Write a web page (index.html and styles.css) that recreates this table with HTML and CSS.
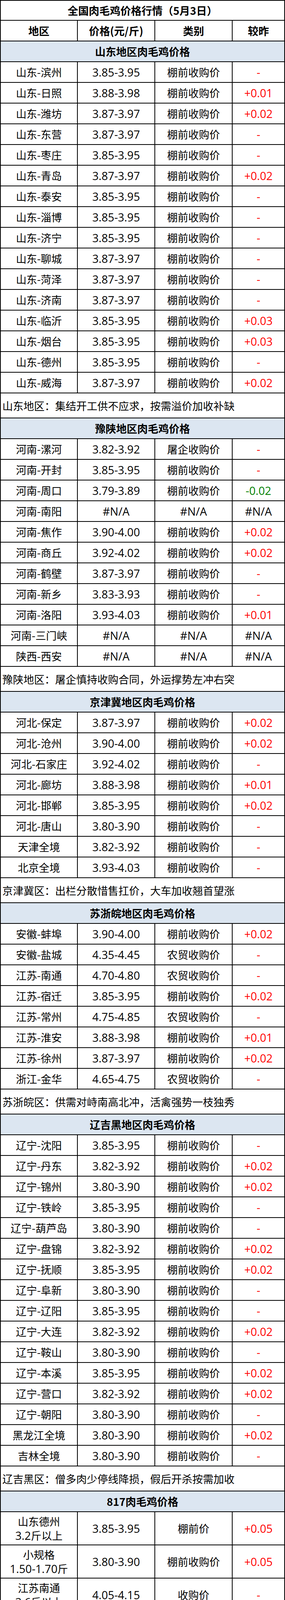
FILE: index.html
```html
<!DOCTYPE html>
<html lang="zh-CN">
<head>
<meta charset="utf-8">
<title>全国肉毛鸡价格行情</title>
<link rel="stylesheet" href="styles.css">
</head>
<body>
<div class="sheet">
  <div class="row title"><div class="c wide">全国肉毛鸡价格行情（5月3日）</div></div>
  <div class="row head"><div class="c">地区</div><div class="c">价格(元/斤)</div><div class="c">类别</div><div class="c">较昨</div></div>

  <div class="row sec"><div class="c wide">山东地区肉毛鸡价格</div></div>
  <div class="row"><div class="c">山东-滨州</div><div class="c n">3.85-3.95</div><div class="c">棚前收购价</div><div class="c n flat">-</div></div>
  <div class="row"><div class="c">山东-日照</div><div class="c n">3.88-3.98</div><div class="c">棚前收购价</div><div class="c n up">+0.01</div></div>
  <div class="row"><div class="c">山东-潍坊</div><div class="c n">3.87-3.97</div><div class="c">棚前收购价</div><div class="c n up">+0.02</div></div>
  <div class="row"><div class="c">山东-东营</div><div class="c n">3.87-3.97</div><div class="c">棚前收购价</div><div class="c n flat">-</div></div>
  <div class="row"><div class="c">山东-枣庄</div><div class="c n">3.85-3.95</div><div class="c">棚前收购价</div><div class="c n flat">-</div></div>
  <div class="row"><div class="c">山东-青岛</div><div class="c n">3.87-3.97</div><div class="c">棚前收购价</div><div class="c n up">+0.02</div></div>
  <div class="row"><div class="c">山东-泰安</div><div class="c n">3.85-3.95</div><div class="c">棚前收购价</div><div class="c n flat">-</div></div>
  <div class="row"><div class="c">山东-淄博</div><div class="c n">3.85-3.95</div><div class="c">棚前收购价</div><div class="c n flat">-</div></div>
  <div class="row"><div class="c">山东-济宁</div><div class="c n">3.85-3.95</div><div class="c">棚前收购价</div><div class="c n flat">-</div></div>
  <div class="row"><div class="c">山东-聊城</div><div class="c n">3.87-3.97</div><div class="c">棚前收购价</div><div class="c n flat">-</div></div>
  <div class="row"><div class="c">山东-菏泽</div><div class="c n">3.87-3.97</div><div class="c">棚前收购价</div><div class="c n flat">-</div></div>
  <div class="row"><div class="c">山东-济南</div><div class="c n">3.87-3.97</div><div class="c">棚前收购价</div><div class="c n flat">-</div></div>
  <div class="row"><div class="c">山东-临沂</div><div class="c n">3.85-3.95</div><div class="c">棚前收购价</div><div class="c n up">+0.03</div></div>
  <div class="row"><div class="c">山东-烟台</div><div class="c n">3.85-3.95</div><div class="c">棚前收购价</div><div class="c n up">+0.03</div></div>
  <div class="row"><div class="c">山东-德州</div><div class="c n">3.85-3.95</div><div class="c">棚前收购价</div><div class="c n flat">-</div></div>
  <div class="row"><div class="c">山东-威海</div><div class="c n">3.87-3.97</div><div class="c">棚前收购价</div><div class="c n up">+0.02</div></div>
  <div class="row note"><div class="c wide">山东地区：集结开工供不应求，按需溢价加收补缺</div></div>

  <div class="row sec"><div class="c wide">豫陕地区肉毛鸡价格</div></div>
  <div class="row"><div class="c">河南-漯河</div><div class="c n">3.82-3.92</div><div class="c">屠企收购价</div><div class="c n flat">-</div></div>
  <div class="row"><div class="c">河南-开封</div><div class="c n">3.85-3.95</div><div class="c">棚前收购价</div><div class="c n flat">-</div></div>
  <div class="row"><div class="c">河南-周口</div><div class="c n">3.79-3.89</div><div class="c">棚前收购价</div><div class="c n dn">-0.02</div></div>
  <div class="row"><div class="c">河南-南阳</div><div class="c n">#N/A</div><div class="c n">#N/A</div><div class="c n">#N/A</div></div>
  <div class="row"><div class="c">河南-焦作</div><div class="c n">3.90-4.00</div><div class="c">棚前收购价</div><div class="c n up">+0.02</div></div>
  <div class="row"><div class="c">河南-商丘</div><div class="c n">3.92-4.02</div><div class="c">棚前收购价</div><div class="c n up">+0.02</div></div>
  <div class="row"><div class="c">河南-鹤壁</div><div class="c n">3.87-3.97</div><div class="c">棚前收购价</div><div class="c n flat">-</div></div>
  <div class="row"><div class="c">河南-新乡</div><div class="c n">3.83-3.93</div><div class="c">棚前收购价</div><div class="c n flat">-</div></div>
  <div class="row"><div class="c">河南-洛阳</div><div class="c n">3.93-4.03</div><div class="c">棚前收购价</div><div class="c n up">+0.01</div></div>
  <div class="row"><div class="c">河南-三门峡</div><div class="c n">#N/A</div><div class="c n">#N/A</div><div class="c n">#N/A</div></div>
  <div class="row"><div class="c">陕西-西安</div><div class="c n">#N/A</div><div class="c n">#N/A</div><div class="c n">#N/A</div></div>
  <div class="row note"><div class="c wide">豫陕地区：屠企慎持收购合同，外运撑势左冲右突</div></div>

  <div class="row sec"><div class="c wide">京津冀地区肉毛鸡价格</div></div>
  <div class="row"><div class="c">河北-保定</div><div class="c n">3.87-3.97</div><div class="c">棚前收购价</div><div class="c n up">+0.02</div></div>
  <div class="row"><div class="c">河北-沧州</div><div class="c n">3.90-4.00</div><div class="c">棚前收购价</div><div class="c n up">+0.02</div></div>
  <div class="row"><div class="c">河北-石家庄</div><div class="c n">3.92-4.02</div><div class="c">棚前收购价</div><div class="c n flat">-</div></div>
  <div class="row"><div class="c">河北-廊坊</div><div class="c n">3.88-3.98</div><div class="c">棚前收购价</div><div class="c n up">+0.01</div></div>
  <div class="row"><div class="c">河北-邯郸</div><div class="c n">3.85-3.95</div><div class="c">棚前收购价</div><div class="c n up">+0.02</div></div>
  <div class="row"><div class="c">河北-唐山</div><div class="c n">3.80-3.90</div><div class="c">棚前收购价</div><div class="c n flat">-</div></div>
  <div class="row"><div class="c">天津全境</div><div class="c n">3.82-3.92</div><div class="c">棚前收购价</div><div class="c n flat">-</div></div>
  <div class="row"><div class="c">北京全境</div><div class="c n">3.93-4.03</div><div class="c">棚前收购价</div><div class="c n flat">-</div></div>
  <div class="row note"><div class="c wide">京津冀区：出栏分散惜售扛价，大车加收翘首望涨</div></div>

  <div class="row sec"><div class="c wide">苏浙皖地区肉毛鸡价格</div></div>
  <div class="row"><div class="c">安徽-蚌埠</div><div class="c n">3.90-4.00</div><div class="c">棚前收购价</div><div class="c n up">+0.02</div></div>
  <div class="row"><div class="c">安徽-盐城</div><div class="c n">4.35-4.45</div><div class="c">农贸收购价</div><div class="c n flat">-</div></div>
  <div class="row"><div class="c">江苏-南通</div><div class="c n">4.70-4.80</div><div class="c">农贸收购价</div><div class="c n flat">-</div></div>
  <div class="row"><div class="c">江苏-宿迁</div><div class="c n">3.85-3.95</div><div class="c">棚前收购价</div><div class="c n up">+0.02</div></div>
  <div class="row"><div class="c">江苏-常州</div><div class="c n">4.75-4.85</div><div class="c">农贸收购价</div><div class="c n flat">-</div></div>
  <div class="row"><div class="c">江苏-淮安</div><div class="c n">3.88-3.98</div><div class="c">棚前收购价</div><div class="c n up">+0.01</div></div>
  <div class="row"><div class="c">江苏-徐州</div><div class="c n">3.87-3.97</div><div class="c">棚前收购价</div><div class="c n up">+0.02</div></div>
  <div class="row"><div class="c">浙江-金华</div><div class="c n">4.65-4.75</div><div class="c">农贸收购价</div><div class="c n flat">-</div></div>
  <div class="row note"><div class="c wide">苏浙皖区：供需对峙南高北冲，活禽强势一枝独秀</div></div>

  <div class="row sec"><div class="c wide">辽吉黑地区肉毛鸡价格</div></div>
  <div class="row"><div class="c">辽宁-沈阳</div><div class="c n">3.85-3.95</div><div class="c">棚前收购价</div><div class="c n flat">-</div></div>
  <div class="row"><div class="c">辽宁-丹东</div><div class="c n">3.82-3.92</div><div class="c">棚前收购价</div><div class="c n up">+0.02</div></div>
  <div class="row"><div class="c">辽宁-锦州</div><div class="c n">3.80-3.90</div><div class="c">棚前收购价</div><div class="c n up">+0.02</div></div>
  <div class="row"><div class="c">辽宁-铁岭</div><div class="c n">3.85-3.95</div><div class="c">棚前收购价</div><div class="c n flat">-</div></div>
  <div class="row"><div class="c">辽宁-葫芦岛</div><div class="c n">3.80-3.90</div><div class="c">棚前收购价</div><div class="c n flat">-</div></div>
  <div class="row"><div class="c">辽宁-盘锦</div><div class="c n">3.82-3.92</div><div class="c">棚前收购价</div><div class="c n up">+0.02</div></div>
  <div class="row"><div class="c">辽宁-抚顺</div><div class="c n">3.85-3.95</div><div class="c">棚前收购价</div><div class="c n up">+0.02</div></div>
  <div class="row"><div class="c">辽宁-阜新</div><div class="c n">3.80-3.90</div><div class="c">棚前收购价</div><div class="c n flat">-</div></div>
  <div class="row"><div class="c">辽宁-辽阳</div><div class="c n">3.85-3.95</div><div class="c">棚前收购价</div><div class="c n flat">-</div></div>
  <div class="row"><div class="c">辽宁-大连</div><div class="c n">3.82-3.92</div><div class="c">棚前收购价</div><div class="c n up">+0.02</div></div>
  <div class="row"><div class="c">辽宁-鞍山</div><div class="c n">3.80-3.90</div><div class="c">棚前收购价</div><div class="c n flat">-</div></div>
  <div class="row"><div class="c">辽宁-本溪</div><div class="c n">3.85-3.95</div><div class="c">棚前收购价</div><div class="c n up">+0.02</div></div>
  <div class="row"><div class="c">辽宁-营口</div><div class="c n">3.82-3.92</div><div class="c">棚前收购价</div><div class="c n up">+0.02</div></div>
  <div class="row"><div class="c">辽宁-朝阳</div><div class="c n">3.80-3.90</div><div class="c">棚前收购价</div><div class="c n flat">-</div></div>
  <div class="row"><div class="c">黑龙江全境</div><div class="c n">3.80-3.90</div><div class="c">棚前收购价</div><div class="c n up">+0.02</div></div>
  <div class="row"><div class="c">吉林全境</div><div class="c n">3.80-3.90</div><div class="c">棚前收购价</div><div class="c n flat">-</div></div>
  <div class="row note"><div class="c wide">辽吉黑区：僧多肉少停线降损，假后开杀按需加收</div></div>

  <div class="row sec"><div class="c wide">817肉毛鸡价格</div></div>
  <div class="row dbl"><div class="c">山东德州<br><span class="d">3.2</span>斤以上</div><div class="c n">3.85-3.95</div><div class="c">棚前价</div><div class="c n up">+0.05</div></div>
  <div class="row dbl"><div class="c">小规格<br><span class="d">1.50-1.70</span>斤</div><div class="c n">3.80-3.90</div><div class="c">棚前收购价</div><div class="c n up">+0.05</div></div>
  <div class="row dbl"><div class="c">江苏南通<br><span class="d">3.6</span>斤以上</div><div class="c n">4.05-4.15</div><div class="c">收购价</div><div class="c n flat">-</div></div>
  <div class="row dbl"><div class="c">山东聊城<br><span class="d">2.8-3.2</span>斤</div><div class="c n">3.90-4.00</div><div class="c">棚前收购价</div><div class="c n up">+0.05</div></div>
  <div class="row dbl"><div class="c">浙江金华<br><span class="d">3.6</span>斤以上</div><div class="c n">4.65-4.75</div><div class="c">农贸收购价</div><div class="c n flat">-</div></div>
  <div class="row dbl"><div class="c">河南濮阳<br><span class="d">3.2-3.5</span>斤</div><div class="c n">3.95-4.05</div><div class="c">棚前收购价</div><div class="c n flat">-</div></div>
  <div class="row dbl"><div class="c">河南新乡<br><span class="d">3.2-3.5</span>斤</div><div class="c n">3.95-4.05</div><div class="c">棚前收购价</div><div class="c n up">+0.05</div></div>
  <div class="row dbl"><div class="c">河南开封<br><span class="d">3.2-3.5</span>斤</div><div class="c n">4.00-4.10</div><div class="c">棚前收购价</div><div class="c n flat">-</div></div>
  <div class="row dbl"><div class="c">津冀地区<br><span class="d">2.8-3.2</span>斤</div><div class="c n">#N/A</div><div class="c n">#N/A</div><div class="c n">#N/A</div></div>
  <div class="row note last"><div class="c wide">肉杂817鸡市场棚前行情：收购加大，提涨加收</div></div>
</div>
</body>
</html>
```

FILE: styles.css
```css
html, body {
  margin: 0;
  padding: 0;
  background: #ffffff;
}

.sheet {
  width: 729px;
  box-sizing: border-box;
  border-left: 2px solid #000000;
  border-top: 2px solid #000000;
  font-family: "Noto Sans CJK SC", "Noto Sans", sans-serif;
  font-size: 27px;
  line-height: 36px;
  color: #000000;
}

.row {
  display: grid;
  grid-template-columns: 197px 198px 198px 134px;
  height: 53px;
  overflow: hidden;
}

.c {
  box-sizing: border-box;
  border-right: 2px solid #000000;
  border-bottom: 2px solid #000000;
  display: flex;
  flex-direction: column;
  align-items: center;
  justify-content: center;
  text-align: center;
  white-space: nowrap;
  padding-top: 1px;
  min-height: 0;
}

.wide {
  grid-column: 1 / -1;
}

.title {
  height: 51px;
}

.title .c,
.head .c,
.sec .c {
  font-weight: bold;
}

.sec .c {
  background: #dce6f1;
}

.note {
  height: 64px;
}

.note.last {
  height: 63px;
}

.note .c {
  align-items: flex-start;
  text-align: left;
  padding-left: 4px;
}

.dbl {
  height: 85px;
}

.dbl .c {
  display: block;
  padding-top: 6px;
}

.dbl .c.n,
.dbl .c:nth-child(3) {
  display: flex;
  padding-top: 1px;
}

.n,
.d {
  font-family: "Open Sans", "Noto Sans CJK SC", sans-serif;
  font-size: 28.5px;
}

.d {
  line-height: 30px;
}

.up,
.flat {
  color: #ff0000;
}

.dn {
  color: #008000;
}
```
